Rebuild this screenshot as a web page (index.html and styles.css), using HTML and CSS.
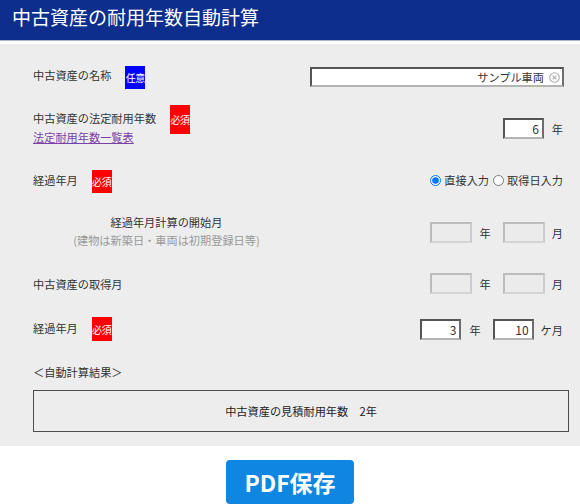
FILE: index.html
```html
<!DOCTYPE html>
<html lang="ja">
<head>
<meta charset="utf-8">
<title>中古資産の耐用年数自動計算</title>
<link rel="stylesheet" href="styles.css">
</head>
<body>
<header class="titlebar"><h1 class="title">中古資産の耐用年数自動計算</h1></header>
<main class="panel">
  <div class="row row-name">
    <div class="label-cell">
      <span class="label">中古資産の名称</span>
      <span class="badge badge-opt">任意</span>
    </div>
    <div class="ctrl ctrl-name">
      <div class="name-input">
        <span class="name-value">サンプル車両</span>
        <svg class="clear-icon" width="11" height="11" viewBox="0 0 11 11"><circle cx="5.5" cy="5.5" r="4.8" fill="none" stroke="#b0b0b0" stroke-width="1.1"/><path d="M3.6 3.6 L7.4 7.4 M7.4 3.6 L3.6 7.4" stroke="#b0b0b0" stroke-width="1.2"/></svg>
      </div>
    </div>
  </div>

  <div class="row row-life">
    <div class="label-cell">
      <div class="label-stack">
        <span class="label">中古資産の法定耐用年数</span>
        <a class="link" href="#">法定耐用年数一覧表</a>
      </div>
      <span class="badge badge-req badge-tall">必須</span>
    </div>
    <div class="ctrl ctrl-life">
      <input class="num" value="6" readonly>
      <span class="unit">年</span>
    </div>
  </div>

  <div class="row row-elapsed">
    <div class="label-cell">
      <span class="label">経過年月</span>
      <span class="badge badge-req">必須</span>
    </div>
    <div class="ctrl ctrl-radio">
      <label class="radio"><input type="radio" name="mode" checked><span>直接入力</span></label>
      <label class="radio"><input type="radio" name="mode"><span>取得日入力</span></label>
    </div>
  </div>

  <div class="row row-start">
    <div class="label-cell label-center">
      <span class="label">経過年月計算の開始月</span>
      <span class="note">(建物は新築日・車両は初期登録日等)</span>
    </div>
    <div class="ctrl ctrl-ym">
      <input class="num off" disabled>
      <span class="unit unit-gap">年</span>
      <input class="num off" disabled>
      <span class="unit">月</span>
    </div>
  </div>

  <div class="row row-acq">
    <div class="label-cell">
      <span class="label">中古資産の取得月</span>
    </div>
    <div class="ctrl ctrl-ym">
      <input class="num off" disabled>
      <span class="unit unit-gap">年</span>
      <input class="num off" disabled>
      <span class="unit">月</span>
    </div>
  </div>

  <div class="row row-elapsed2">
    <div class="label-cell">
      <span class="label">経過年月</span>
      <span class="badge badge-req badge-24">必須</span>
    </div>
    <div class="ctrl ctrl-ym">
      <input class="num" value="3" readonly>
      <span class="unit unit-gap">年</span>
      <input class="num" value="10" readonly>
      <span class="unit">ケ月</span>
    </div>
  </div>

  <p class="result-title">＜自動計算結果＞</p>
  <div class="result-box">中古資産の見積耐用年数　2年</div>
</main>
<div class="actions">
  <button class="pdf-btn" type="button">PDF保存</button>
</div>
</body>
</html>
```

FILE: styles.css
```css
* { box-sizing: border-box; }

body {
  margin: 0;
  background: #ffffff;
  font-family: "Noto Sans CJK JP", "Noto Sans", sans-serif;
  font-size: 11.2px;
  color: #333333;
}

.titlebar {
  height: 41px;
  background: #0d2e8d;
  border-bottom: 1px solid #a9b3d2;
  margin-bottom: 3px;
  padding: 3px 12px 0;
}

.title {
  margin: 0;
  font-size: 19px;
  font-weight: normal;
  line-height: 27px;
  color: #ffffff;
}

.panel {
  background: #ededed;
  padding: 22px 11px 14px 33px;
}

.row {
  display: grid;
  grid-template-columns: 267px 1fr;
  align-items: start;
  padding-right: 6px;
}

.label-cell {
  display: flex;
  align-items: flex-start;
}

.label {
  line-height: 18px;
  white-space: nowrap;
}

.badge {
  width: 20px;
  height: 23px;
  margin-left: 14px;
  display: flex;
  align-items: center;
  justify-content: center;
  font-size: 10px;
  color: #ffffff;
  white-space: nowrap;
  letter-spacing: -0.3px;
}

.badge-opt { background: #0000ff; }
.badge-req { background: #ff0000; }
.badge-tall { height: 29px; margin-left: 14px; }
.badge-24 { height: 24px; }

.ctrl {
  justify-self: end;
  display: flex;
  align-items: center;
}

/* row 1 */
.ctrl-name { margin-right: -1px; margin-top: 1px; }

.name-input {
  width: 254px;
  height: 20px;
  background: #ffffff;
  border: 2px solid;
  border-color: #555555 #6e6e6e #b4b4b4 #555555;
  display: flex;
  align-items: center;
  justify-content: flex-end;
  padding-right: 2px;
}

.name-value {
  line-height: 16px;
  color: #333333;
}

.clear-icon {
  margin-left: 5px;
  display: block;
}

/* row 2 */
.row-life { margin-top: 16px; }

.label-stack {
  display: flex;
  flex-direction: column;
  padding-top: 4px;
}

.label-stack .label { line-height: 19px; }

.link {
  line-height: 19px;
  color: #7b3fa6;
  text-decoration: underline;
}

.ctrl-life { margin-top: 13px; }

.num {
  width: 41px;
  height: 21px;
  margin: 0;
  padding: 0 3px 0 0;
  font-family: "Noto Sans CJK JP", "Noto Sans", sans-serif;
  font-size: 12px;
  color: #333333;
  text-align: right;
  background: #ffffff;
  border: 2px solid;
  border-color: #555555 #6e6e6e #b4b4b4 #555555;
  outline: none;
}

.num.off {
  width: 42px;
  background: #ebebeb;
  border-color: #bcbcbc #cccccc #d4d4d4 #bcbcbc;
}

.unit {
  margin-left: 7px;
  line-height: 18px;
  white-space: nowrap;
}

.ctrl-life .unit { margin-left: 8px; }

.unit-gap { margin-right: 12px; margin-left: 8px; }

/* row 3 */
.row-elapsed { margin-top: 23px; }
.row-elapsed .label { margin-top: 1px; }

.ctrl-radio {
  margin-top: 1px;
  line-height: 18px;
}

.radio {
  display: flex;
  align-items: center;
  white-space: nowrap;
}

.radio + .radio { margin-left: 4px; }

.radio input {
  width: 11px;
  height: 11px;
  margin: 0 3px 0 0;
}

/* row 4 */
.row-start { margin-top: 20px; }

.label-center {
  flex-direction: column;
  align-items: center;
  padding-right: 0;
}

.note {
  line-height: 18px;
  color: #9a9a9a;
  white-space: nowrap;
}

.row-start .ctrl { margin-top: 9px; }

/* row 5 */
.row-acq { margin-top: 24px; }
.row-acq .label { margin-top: 1.5px; }

/* row 6 */
.row-elapsed2 { margin-top: 23px; }
.row-elapsed2 .label { margin-top: 2px; }
.row-elapsed2 .ctrl { margin-top: 2px; }

/* result */
.result-title {
  margin: 22px 0 0;
  line-height: 18px;
}

.result-box {
  margin-top: 9px;
  height: 42px;
  border: 1px solid #4d4d4d;
  display: flex;
  align-items: center;
  justify-content: center;
  color: #222222;
}

.actions {
  display: flex;
  justify-content: center;
  margin-top: 14px;
}

.pdf-btn {
  width: 128px;
  height: 44px;
  border: none;
  border-radius: 4px;
  background: #0f86e2;
  color: #ffffff;
  font-family: "Noto Sans CJK JP", "Noto Sans", sans-serif;
  font-size: 23px;
  font-weight: bold;
  line-height: 44px;
  padding: 0;
}
```
